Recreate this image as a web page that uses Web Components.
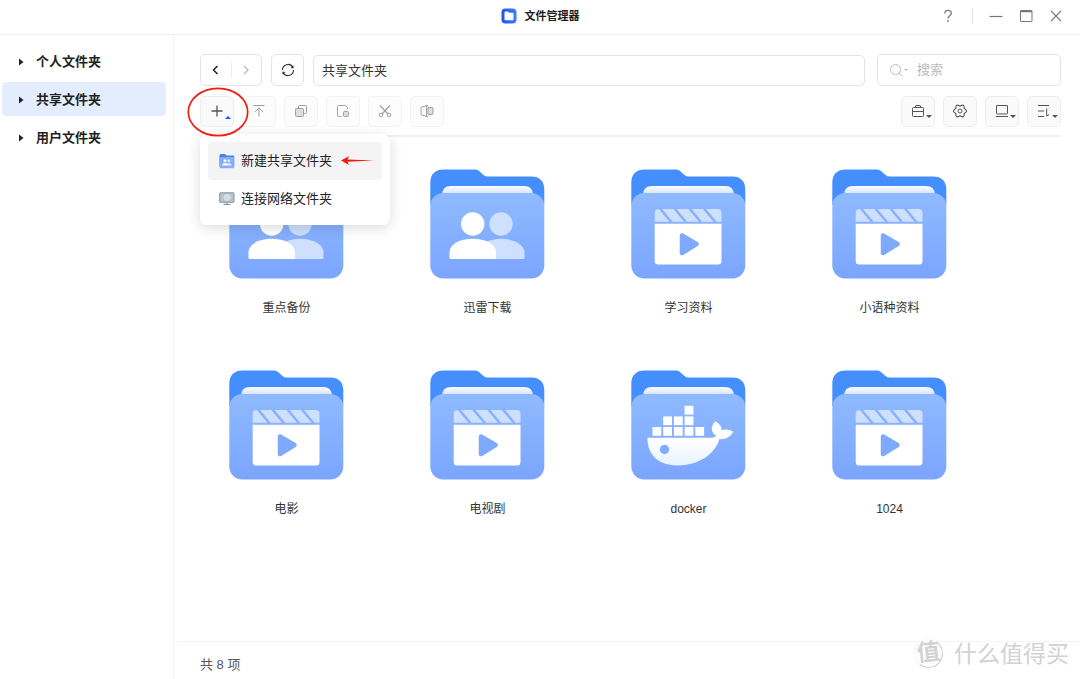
<!DOCTYPE html>
<html lang="zh-CN">
<head>
<meta charset="utf-8">
<meta name="viewport" content="width=device-width, initial-scale=1">
<title>文件管理器</title>
<style>
html, body { margin: 0; }
body { font-family: "Liberation Sans", "Noto Sans CJK SC", sans-serif; font-size: 13px; line-height: 20px; color: #262626; background: #fff; }
</style>
</head>
<body>
<file-manager></file-manager>
<script>
const SHARED = '*{box-sizing:border-box}[hidden]{display:none}svg{display:block;flex:none}button{font:inherit;color:inherit;background:none;border:0;padding:0;margin:0;cursor:pointer}';

const icon = (w, h, body, extra = '') =>
  `<svg width="${w}" height="${h}" viewBox="0 0 ${w} ${h}" fill="none" stroke="currentColor" aria-hidden="true" ${extra}>${body}</svg>`;

const gearLobes = [0, 60, 120, 180, 240, 300]
  .map(a => `<path d="M12.100 5.600 13.900 6.600Q15.200 8 13.900 9.400L12.100 10.400" stroke-width="1.100" transform="rotate(${a} 8 8)"/>`).join('');

const ICONS = {
  back: icon(16, 16, '<path d="M9.500 4 5.500 8l4 4" stroke-width="1.500"/>'),
  forward: icon(16, 16, '<path d="m6 4 4 4-4 4" stroke-width="1.300"/>'),
  refresh: icon(16, 16, '<path d="M2.500 8A5.500 5.500 0 0 1 12.800 5.300M13.500 8A5.500 5.500 0 0 1 3.200 10.700M13 3.800v1.800h-1.800M3 12.200v-1.800h1.800" stroke-width="1.100"/>'),
  plus: icon(16, 16, '<path d="M8 2.500v11M2.500 8h11" stroke-width="1.300"/>'),
  upload: icon(16, 16, '<path d="M2.500 2.500h11M8 13.500V5M3.800 9 8 4.800 12.200 9"/>'),
  copy: icon(16, 16, '<rect x="2.500" y="5.500" width="8" height="8" rx="1" fill="#dedede"/><path d="M5.500 5.300V3.500a1 1 0 0 1 1-1h6a1 1 0 0 1 1 1v6a1 1 0 0 1-1 1h-1.800"/>'),
  paste: icon(16, 16, '<path d="M6.500 13.500h-3a1 1 0 0 1-1-1v-9a1 1 0 0 1 1-1h7l2 2V6"/><rect x="8.500" y="8.500" width="5" height="5" rx="1" fill="#dedede"/>'),
  cut: icon(16, 16, '<path d="m3 2.500 8 8.500M13 2.500 5 11" stroke-width="1.200"/><circle cx="4" cy="12" r="1.800"/><circle cx="12" cy="12" r="1.800"/>'),
  rename: icon(16, 16, '<path d="M6 3.500H4a2 2 0 0 0-2 2v5a2 2 0 0 0 2 2h2M6 2.500h3M6 13.500h3M7.500 2.500v11"/><path d="M9 4.500h4a1 1 0 0 1 1 1v5a1 1 0 0 1-1 1H9z" fill="#dedede"/>'),
  bag: icon(16, 16, '<rect x="2.500" y="4.500" width="11" height="9" rx="1"/><path d="M5.500 4.500v-1a1 1 0 0 1 1-1h3a1 1 0 0 1 1 1v1M2.500 8.500h11" stroke-width="1.100"/>'),
  gear: icon(16, 16, gearLobes + '<circle cx="8" cy="8" r="2"/>'),
  view: icon(16, 16, '<rect x="2.500" y="2.500" width="11" height="8.500" rx=".5"/><path d="M2 13.500h12"/>'),
  sort: icon(16, 16, '<path d="M2 2.500h11M2 8h6M2 13.500h6M10.700 5.500v7.500l2.500-1.500"/>'),
  search: icon(16, 16, '<circle cx="7.500" cy="7.500" r="5"/><path d="m11 11 3.500 3.500"/>'),
  help: icon(16, 16, '<path d="M4.800 5.500C4.800 3.500 6 2.400 8 2.400s3.300 1.100 3.300 2.900C11.300 7.600 8 7.800 8 10.500M8 12v2" stroke-width="1.300"/>'),
  minimize: icon(14, 14, '<path d="M.5 7.500h13" stroke-width="1.200"/>'),
  maximize: icon(14, 14, '<rect x="1.500" y="1.500" width="11.500" height="11" rx=".5"/><path d="M1.500 2.500h11.500" stroke-width="1.500"/>'),
  close: icon(14, 14, '<path d="m2 2 10 10M12 2 2 12" stroke-width="1.100"/>'),
  app: icon(16, 16, '<defs><linearGradient id="a" x1="0" x2="1"><stop stop-color="#204ff5"/><stop offset="1" stop-color="#3c82fb"/></linearGradient></defs><rect x=".5" y=".5" width="15" height="15" rx="4" fill="url(#a)"/><path d="M3.500 4.500q0-1 1-1h2.300l1.400 1.300h3.300q1 0 1 1v5.500q0 1-1 1h-7q-1 0-1-1z" fill="#fff"/>', 'style="stroke:none"'),
  newFolder: icon(16, 16, '<path d="M.5 2.500q0-1.500 1.500-1.500h4l1.500 1.500h6.500q1.200 0 1.200 1V13H.5z" fill="#3d84ee"/><rect x=".5" y="4" width="14.700" height="11.200" rx="1.200" fill="#82adfb"/><circle cx="6" cy="7.800" r="1.500" fill="#fff"/><circle cx="9.800" cy="7.800" r="1.500" fill="#dce9ff"/><path d="M7.500 12.500Q7.500 10 10 10t3 2.500z" fill="#dce9ff"/><path d="M3 12.500Q3 10 6 10t3 2.500z" fill="#fff"/>', 'style="stroke:none"'),
  monitor: icon(16, 16, '<rect x=".7" y="1.800" width="14.300" height="9.500" rx=".5" fill="#b9c6cf" stroke="#84929b"/><circle cx="8" cy="6.500" r="3" fill="#d4dde3" stroke="#e2e9ed" stroke-width=".6"/><path d="M8 11.500v2M4.500 13.500h7" stroke="#84929b" stroke-width="1.200"/>')
};

const PEOPLE = `
  <circle cx="71" cy="55" r="11.700" fill="#cfdffe"/>
  <path d="M48 90V83C49 75 59 69.800 71 69.800S94 75 94.500 83v5.500q0 1.500-1.500 1.500z" fill="#cfdffe"/>
  <circle cx="42.700" cy="55" r="11.700" fill="#fff"/>
  <path d="M21 90q-1.500 0-1.500-1.500V83C20 75 30 69.800 42.700 69.800S65.500 75 66 83v5.500q0 1.500-1.500 1.500z" fill="#fff"/>`;
const VIDEO = `
  <path d="M23.700 52.700V44q0-4 4-4h58.800q4 0 4 4v8.700z" fill="#cfdffe"/>
  <path d="M29 39.500 40.500 53.200M43.500 39.500 55 53.200M58.500 39.500 70 53.200M73 39.500 84.500 53.200" stroke="#87b1fe" stroke-width="2.500"/>
  <path d="M23.700 54.700h66.800V92q0 3.500-3.500 3.500H27.200q-3.500 0-3.500-3.500z" fill="#fff"/>
  <path d="M51 66.500 65.500 75 51 84z" fill="#7fa9fd" stroke="#7fa9fd" stroke-width="4.500" stroke-linejoin="round"/>`;
const box = (x, y) => `<rect x="${x}" y="${y}" width="8.800" height="8.800" fill="#fff"/>`;
const DOCKER = [[21.5,57],[32.2,57],[42.9,57],[53.6,57],[64.3,57],[32.2,46.4],[42.9,46.4],[53.6,46.4],[53.6,35.8]].map(p => box(...p)).join('') + `
  <path d="M16.500 67.800H75C80 67.800 84 68 85 65.500 79.500 62 79.500 56 84.500 51.200 89 54 91 57 90.500 60.200 94 58.800 99 59.500 102 61.700 99.500 67 94 69.800 88.500 69 84 84 68 95.500 46 95.500 25 95.500 16 82 16.500 67.800Z" fill="url(#hull)"/>
  <circle cx="33.500" cy="79.500" r="4.700" fill="#82adfd"/>`;
const ART = { people: PEOPLE, video: VIDEO, docker: DOCKER };

class Base extends HTMLElement {
  connectedCallback() {
    if (this.shadowRoot) return;
    this.attachShadow({ mode: 'open' }).innerHTML = `<style>${SHARED}${this.css()}</style>${this.html()}`;
  }
  css() { return ''; }
  html() { return '<slot></slot>'; }
}

customElements.define('title-bar', class extends Base {
  css() { return `
    :host{display:block;border-bottom:1px solid #f0f0f0}
    header{display:grid;grid-template-columns:1fr auto 1fr;align-items:center;height:34px;padding:0 0 2px}
    h1{grid-column:2;display:flex;align-items:center;gap:8px;margin:0;font-size:11px;font-weight:700;color:#1c1c1c}
    nav{display:flex;justify-content:flex-end;align-items:center;gap:16px;padding-right:17px;color:#777}
    i{width:1px;height:16px;background:#e3e3e3}`; }
  html() { return `<header><h1>${ICONS.app}<slot></slot></h1><nav>
    <button aria-label="帮助">${ICONS.help}</button><i></i>
    <button aria-label="最小化">${ICONS.minimize}</button>
    <button aria-label="最大化">${ICONS.maximize}</button>
    <button aria-label="关闭">${ICONS.close}</button></nav></header>`; }
});

customElements.define('tree-item', class extends Base {
  css() { return `
    :host{display:block}
    button{display:flex;align-items:center;gap:12px;width:100%;height:34px;padding:1px 0 0 16px;border-radius:4px;font-weight:700;color:#1f1f1f;text-align:left}
    :host([selected]) button{background:#e4edfe}`; }
  html() { return `<button>${icon(6, 8, '<path d="M1 .5v7L5.500 4z" fill="#222" stroke="none"/>')}<slot></slot></button>`; }
});

customElements.define('tool-button', class extends Base {
  css() { return `
    :host{display:block}
    button{position:relative;display:flex;align-items:center;justify-content:center;width:34px;height:31px;padding-bottom:2px;border:1px solid #ededed;border-radius:5px;background:#fafafa;color:#555}
    :host([disabled]) button{color:#a0a0a0;border-color:#f3f3f3;background:#fcfcfc}
    .caret{position:absolute;right:2px;bottom:7px}
    .up{color:#1557ff}`; }
  html() {
    const c = this.getAttribute('caret');
    const caret = c ? `<span class="caret ${c}">${icon(6, 4, `<path d="${c === 'up' ? 'M0 4 3 1l3 3z' : 'M0 0h6L3 3z'}" fill="currentColor" stroke="none"/>`)}</span>` : '';
    return `<button aria-label="${this.getAttribute('label')}" ${this.hasAttribute('disabled') ? 'disabled' : ''}>${ICONS[this.getAttribute('icon')]}${caret}</button>`;
  }
});

customElements.define('menu-item', class extends Base {
  css() { return `
    :host{display:block}
    button{display:flex;align-items:center;width:100%;height:38px;padding-left:11px;gap:6px;border-radius:4px;color:#222;text-align:left;white-space:nowrap}
    .text{width:94px}
    :host([active]) button{background:#f4f4f4}`; }
  html() { return `<button role="menuitem">${ICONS[this.getAttribute('icon')]}<span class="text"><slot></slot></span><slot name="mark"></slot></button>`; }
});

customElements.define('popup-menu', class extends Base {
  css() { return `
    :host{display:block;width:190px;padding:8px 8px 7px;border-radius:7px;background:#fff;box-shadow:0 3px 14px rgba(0,0,0,.14)}`; }
  html() { return '<div role="menu"><slot></slot></div>'; }
});

customElements.define('nav-row', class extends Base {
  css() { return `
    :host{display:flex;align-items:center;gap:9px;height:32px}
    .pair,.refresh,.path,.search{border:1px solid #e4e4e4;border-radius:5px;background:#fff}
    .pair{display:flex;align-items:center;width:62px;height:32px}
    .pair button{flex:1;height:16px;display:flex;justify-content:center;color:#222}
    .pair button+button{border-left:1px solid #eee;color:#bbb}
    .refresh{width:33px;height:32px;display:flex;align-items:center;justify-content:center;color:#333}
    input{font:inherit;min-width:0;outline:0}
    .path{flex:1;height:31px;padding:0 8px 1px;color:#333}
    .search{width:184px;height:32px;margin-left:3px;padding:0 10px;display:flex;align-items:center;color:#bbb}
    .search input{flex:1;border:0;padding:0;margin-left:9px;background:none}
    .search input::placeholder{color:#bbb;opacity:1}`; }
  html() { return `
    <div class="pair"><button aria-label="后退">${ICONS.back}</button><button aria-label="前进">${ICONS.forward}</button></div>
    <button class="refresh" aria-label="刷新">${ICONS.refresh}</button>
    <input class="path" aria-label="路径" value="共享文件夹">
    <label class="search">${ICONS.search}${icon(4, 3, '<path d="M0 0h4L2 2z" fill="currentColor" stroke="none"/>')}<input type="text" aria-label="搜索" placeholder="搜索"></label>`; }
});

customElements.define('tool-row', class extends Base {
  css() { return `
    :host{display:flex;gap:8px;position:relative;margin-top:10px;padding-bottom:8px;border-bottom:2px solid #f2f2f2}
    .space{flex:1}
    .create{position:relative;z-index:2}
    .ring{position:absolute;left:-13px;top:-9px;pointer-events:none}
    popup-menu{position:absolute;left:0;top:38px;z-index:1}`; }
  html() { return `
    <div class="create"><tool-button icon="plus" caret="up" label="新建"></tool-button>
      <svg class="ring" width="62" height="50" viewBox="0 0 62 50" fill="none" aria-hidden="true"><ellipse cx="31" cy="25" rx="29.700" ry="23.700" stroke="#f3190d" stroke-width="1.700"/></svg></div>
    <tool-button icon="upload" label="上传" disabled></tool-button>
    <tool-button icon="copy" label="复制" disabled></tool-button>
    <tool-button icon="paste" label="粘贴" disabled></tool-button>
    <tool-button icon="cut" label="剪切" disabled></tool-button>
    <tool-button icon="rename" label="重命名" disabled></tool-button>
    <div class="space"></div>
    <tool-button icon="bag" caret="down" label="工具"></tool-button>
    <tool-button icon="gear" label="设置"></tool-button>
    <tool-button icon="view" caret="down" label="视图"></tool-button>
    <tool-button icon="sort" caret="down" label="排序"></tool-button>
    <popup-menu>
      <menu-item icon="newFolder" active>新建共享文件夹<svg slot="mark" width="34" height="10" viewBox="0 0 34 10" aria-hidden="true"><path d="M0 4.500 8 .2 6.500 3.500 33 4.500 6.500 5.800 8 9z" fill="#f3190d"/></svg></menu-item>
      <menu-item icon="monitor">连接网络文件夹</menu-item>
    </popup-menu>`; }
});

customElements.define('folder-tile', class extends Base {
  css() { return `
    :host{display:block}
    button{display:flex;flex-direction:column;align-items:center;width:100%;gap:19px;font-size:12px;color:#333}`; }
  html() { return `<button>
    <svg width="115" height="110" viewBox="0 0 115 110" aria-hidden="true">
      <defs>
        <linearGradient id="front" x1="0" y1="0" x2="0" y2="1"><stop stop-color="#8fbaff"/><stop offset="1" stop-color="#7ba5fe"/></linearGradient>
        <linearGradient id="paper" x1="0" y1="0" x2="0" y2="1"><stop stop-color="#fbfdff"/><stop offset="1" stop-color="#cfdff5"/></linearGradient>
        <linearGradient id="hull" x1="0" y1="0" x2="0" y2="1"><stop offset=".4" stop-color="#fff"/><stop offset="1" stop-color="#e6f3ff"/></linearGradient>
      </defs>
      <path d="M.3 36V14Q.3.500 14 .5h31.500q2 0 3.500 1.500l4.500 4q2 1.500 4 1.500H101q13.300 0 13.300 13.500V36z" fill="#448ffd"/>
      <path d="M12 26q0-9 9-9h73q9 0 9 9z" fill="url(#paper)"/>
      <rect x=".3" y="24" width="114" height="85.500" rx="13" fill="url(#front)"/>
      ${ART[this.getAttribute('kind')]}
    </svg><span><slot></slot></span></button>`; }
});

customElements.define('brand-mark', class extends Base {
  css() { return `
    :host{display:flex;align-items:center;gap:11px;color:#d2d2d2;font-size:23px;line-height:32px;white-space:nowrap;text-shadow:-1px -1px 0 #fff}
    b{width:29px;height:29px;line-height:25px;border:1px solid;border-color:#f2f2f2 #ccc #ccc #f2f2f2;border-radius:50%;background:#fff;text-align:center;font-size:23px;font-weight:700;transform:rotate(-6deg)}`; }
  html() { return '<b>值</b><span><slot></slot></span>'; }
});

customElements.define('file-manager', class extends Base {
  css() { return `
    :host{display:flex;flex-direction:column;min-height:100vh;background:#fff}
    .body{flex:1;display:flex}
    aside{width:174px;flex:none;display:flex;flex-direction:column;gap:4px;padding:9px 7px 0 2px;border-right:1px solid #f4f4f4}
    main{flex:1;min-width:0;display:flex;flex-direction:column}
    .bars{padding:19px 19px 0 26px}
    .grid{flex:1;display:grid;grid-template-columns:repeat(auto-fill,201px);align-content:start;row-gap:52px;padding:32px 0 32px 12px}
    footer{display:flex;align-items:center;justify-content:space-between;height:38px;margin-left:3px;padding:8px 11px 0 23px;border-top:1px solid #f4f4f4;color:#555}
    brand-mark{position:relative;top:-11px}`; }
  html() { return `
    <title-bar>文件管理器</title-bar>
    <div class="body">
      <aside><tree-item>个人文件夹</tree-item><tree-item selected>共享文件夹</tree-item><tree-item>用户文件夹</tree-item></aside>
      <main>
        <div class="bars"><nav-row></nav-row><tool-row></tool-row></div>
        <div class="grid">
          <folder-tile kind="people">重点备份</folder-tile>
          <folder-tile kind="people">迅雷下载</folder-tile>
          <folder-tile kind="video">学习资料</folder-tile>
          <folder-tile kind="video">小语种资料</folder-tile>
          <folder-tile kind="video">电影</folder-tile>
          <folder-tile kind="video">电视剧</folder-tile>
          <folder-tile kind="docker">docker</folder-tile>
          <folder-tile kind="video">1024</folder-tile>
        </div>
        <footer><span>共 8 项</span><brand-mark>什么值得买</brand-mark></footer>
      </main>
    </div>`; }
});
</script>
</body>
</html>
